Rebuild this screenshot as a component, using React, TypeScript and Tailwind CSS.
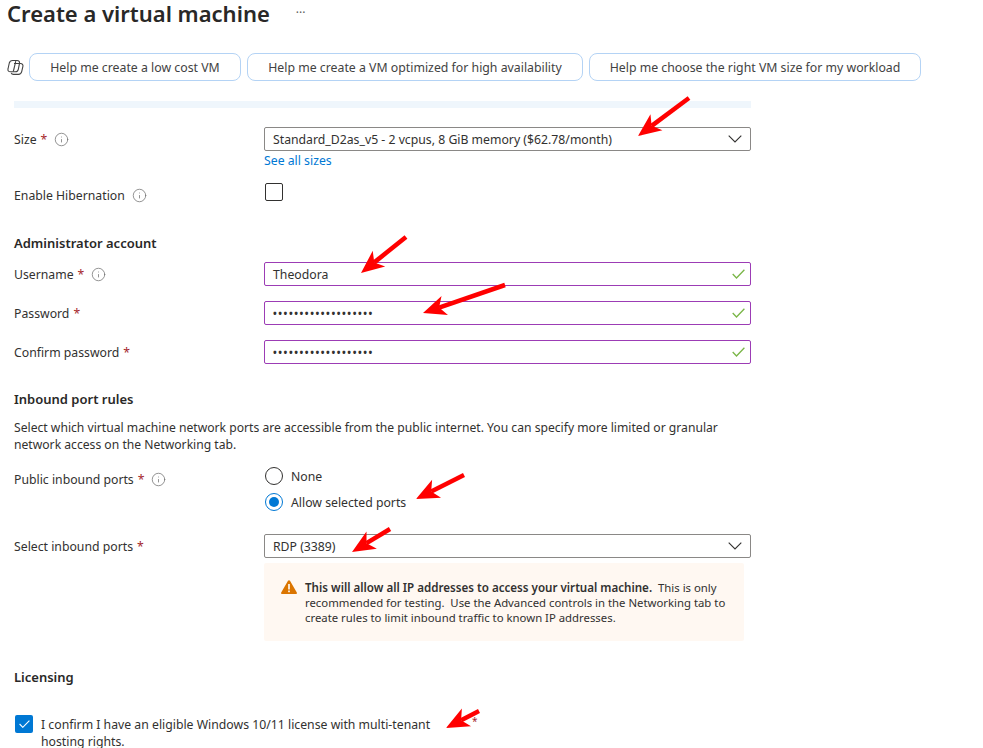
import { ReactNode } from 'react';
import { Info } from 'lucide-react';

const arrows = [
    [689, 98, 638, 136],
    [406, 237, 361, 273],
    [505, 285, 423, 313],
    [464, 475, 416, 499],
    [390, 529, 352, 552],
    [479, 711, 446, 728],
];

function RedArrow({ from }: { from: number[] }) {
    const [x1, y1, x2, y2] = from;
    const len = Math.hypot(x2 - x1, y2 - y1);
    const ux = (x2 - x1) / len;
    const uy = (y2 - y1) / len;
    const bx = x2 - ux * 23;
    const by = y2 - uy * 23;
    const nx = x2 - ux * 17;
    const ny = y2 - uy * 17;
    const wing = 10;
    const points = `${x2},${y2} ${bx - uy * wing},${by + ux * wing} ${nx},${ny} ${bx + uy * wing},${by - ux * wing}`;
    return (
        <g>
            <line x1={x1} y1={y1} x2={nx} y2={ny} stroke="#ff0000" strokeWidth={4.5} />
            <polygon points={points} fill="#ff0000" />
        </g>
    );
}

function InfoIcon() {
    return <Info className="ml-[7px] h-[15px] w-[15px] text-[#707070]" strokeWidth={1.2} />;
}

function Req() {
    return <span className="ml-[4px] text-[#a4262c]">*</span>;
}

function Row({ label, required, info, className, children }: { label: string; required?: boolean; info?: boolean; className: string; children: ReactNode }) {
    return (
        <div className={`flex ${className}`}>
            <div className="flex h-[24px] w-[250px] items-center">
                <span>{label}</span>
                {required && <Req />}
                {info && <InfoIcon />}
            </div>
            <div className="flex-1">{children}</div>
        </div>
    );
}

function SelectBox({ value }: { value: string }) {
    return (
        <div className="flex h-[24px] items-center justify-between rounded-[2px] border border-[#8a8886] pr-[8px] pl-[8px]">
            <span>{value}</span>
            <svg className="h-[8px] w-[14px] text-[#323130]" viewBox="0 0 14 8" fill="none" stroke="currentColor" strokeWidth={1.1}>
                <path d="M.7.7 7 7 13.300.7" />
            </svg>
        </div>
    );
}

function TextBox({ value, masked }: { value: string; masked?: boolean }) {
    return (
        <div className="flex h-[24px] items-center justify-between rounded-[2px] border border-[#9c3cb5] pr-[5px] pl-[8px]">
            <span className={masked ? 'text-[10px] font-bold tracking-[1.55px]' : ''}>{value}</span>
            <svg className="h-[10px] w-[13px] text-[#7ab648]" viewBox="0 0 13 10" fill="none" stroke="currentColor" strokeWidth={1.3}>
                <path d="M.7 5 4.500 9 12.400.7" />
            </svg>
        </div>
    );
}

function Heading({ children, className }: { children: ReactNode; className: string }) {
    return <h2 className={`text-[13px] font-semibold text-[#292827] ${className}`}>{children}</h2>;
}

export default function App() {
    return (
        <div className="relative h-[748px] w-[983px] overflow-hidden bg-white font-['Noto_Sans',sans-serif] text-[12.25px] leading-[17px] text-[#323130]">
            {/* Title */}
            <div className="flex h-[26px] items-center pl-[7px]">
                <h1 className="text-[22px] leading-[26px] font-semibold whitespace-nowrap text-[#292827]">Create a virtual machine</h1>
                <span className="ml-[26px] text-[12px] leading-none text-[#605e5c]">···</span>
            </div>

            {/* Copilot prompts */}
            <div className="mt-[27px] flex items-center pl-[7px]">
                <svg className="h-[17px] w-[17px] text-[#424242]" viewBox="0 0 17 17" fill="none" stroke="currentColor" strokeWidth={1.1}>
                    <path d="M5.500 1.500h4.500c2 0 2.800 1.200 2.500 2.800l-1.200 6c-.4 1.700-1.500 2.500-3 2.500H3.500C1.500 12.800.6 11.600 1 10L2.300 4c.4-1.600 1.700-2.500 3.200-2.500z" />
                    <path d="M7 4.500h6.500c1.800 0 2.800 1.200 2.400 2.800L14.700 12.700c-.4 1.700-1.500 2.700-3.200 2.700H6.500c-1.300 0-2-.6-2.300-1.500" />
                    <path d="M8.800 2.200 6.300 12.500" />
                </svg>
                <div className="ml-[5px] flex gap-[6px] text-[12.3px]">
                    {['Help me create a low cost VM', 'Help me create a VM optimized for high availability', 'Help me choose the right VM size for my workload'].map((t, i) => (
                        <button
                            key={t}
                            className={`h-[28px] rounded-[8px] border border-[#b4d3f5] text-[#424242] ${i === 0 ? 'w-[212px]' : i === 1 ? 'w-[336px]' : 'w-[332px]'}`}
                        >
                            {t}
                        </button>
                    ))}
                </div>
            </div>

            {/* Form */}
            <div className="ml-[14px] w-[737px]">
                <div className="mt-[20px] h-[7px] bg-[#eff6fc]" />

                <Row label="Size" required info className="mt-[19px]">
                    <SelectBox value="Standard_D2as_v5 - 2 vcpus, 8 GiB memory ($62.78/month)" />
                    <a className="mt-[1px] block text-[#0078d4]">See all sizes</a>
                </Row>

                <div className="mt-[14px] flex">
                    <div className="flex h-[24px] w-[250px] items-center">
                        <span>Enable Hibernation</span>
                        <InfoIcon />
                    </div>
                    <div className="ml-[1px] h-[18px] w-[18px] rounded-[2px] border border-[#323130]" />
                </div>

                <Heading className="mt-[28px]">Administrator account</Heading>
                <Row label="Username" required info className="mt-[10px]">
                    <TextBox value="Theodora" />
                </Row>
                <Row label="Password" required className="mt-[15px]">
                    <TextBox masked value="•••••••••••••••••••" />
                </Row>
                <Row label="Confirm password" required className="mt-[15px]">
                    <TextBox masked value="•••••••••••••••••••" />
                </Row>

                <Heading className="mt-[27px]">Inbound port rules</Heading>
                <p className="mt-[11px] w-[737px] text-[12.15px]">
                    Select which virtual machine network ports are accessible from the public internet. You can specify more limited or granular network access on the Networking tab.
                </p>

                <div className="mt-[14px] flex">
                    <div className="flex h-[24px] w-[250px] items-center">
                        <span>Public inbound ports</span>
                        <Req />
                        <InfoIcon />
                    </div>
                    <div className="flex flex-col gap-[8px] pl-[1px]">
                        <label className="flex items-center gap-[8px]">
                            <span className="h-[18px] w-[18px] rounded-full border border-[#323130]" />
                            None
                        </label>
                        <label className="flex items-center gap-[8px]">
                            <span className="flex h-[18px] w-[18px] items-center justify-center rounded-full border border-[#0078d4]">
                                <span className="h-[10px] w-[10px] rounded-full bg-[#0078d4]" />
                            </span>
                            Allow selected ports
                        </label>
                    </div>
                </div>

                <Row label="Select inbound ports" required className="mt-[23px]">
                    <SelectBox value="RDP (3389)" />
                    <div className="mt-[5px] flex h-[78px] w-[480px] rounded-[2px] bg-[#fff8f2] pt-[17px] pl-[17px] text-[11.35px] leading-[15px]">
                        <svg className="h-[14px] w-[16px] shrink-0" viewBox="0 0 16 14">
                            <path d="M8 .2c.4 0 .8.2 1 .6l6.800 11.600c.4.700-.1 1.500-.9 1.500H1.100c-.8 0-1.300-.8-.9-1.500L7 .8c.2-.4.6-.6 1-.6z" fill="#db7500" />
                            <rect x="7.200" y="4" width="1.600" height="5.500" fill="#fff" />
                            <rect x="7.200" y="10.500" width="1.600" height="1.700" fill="#fff" />
                        </svg>
                        <p className="ml-[8px] w-[425px]">
                            <b className="text-[11.6px] font-semibold">This will allow all IP addresses to access your virtual machine.</b>&nbsp; This is only recommended for testing.&nbsp; Use the Advanced controls in the Networking tab to create rules to limit inbound traffic to known IP addresses.
                        </p>
                    </div>
                </Row>

                <Heading className="mt-[28px]">Licensing</Heading>
                <div className="mt-[29px] flex">
                    <span className="ml-[1px] flex h-[18px] w-[18px] shrink-0 items-center justify-center rounded-[2px] bg-[#0078d4]">
                        <svg className="h-[8px] w-[11px] text-white" viewBox="0 0 11 8" fill="none" stroke="currentColor" strokeWidth={1.1}>
                            <path d="M.6 4 3.800 7.300 10.400.6" />
                        </svg>
                    </span>
                    <p className="ml-[8px] w-[400px] pt-[1px]">I confirm I have an eligible Windows 10/11 license with multi-tenant hosting rights.</p>
                </div>
            </div>

            <span className="absolute top-[713px] left-[472px] text-[10px] text-[#a4262c]">*</span>

            {/* Annotations */}
            <svg className="pointer-events-none absolute inset-0 h-full w-full">
                {arrows.map((a) => (
                    <RedArrow key={a[0]} from={a} />
                ))}
            </svg>
        </div>
    );
}
